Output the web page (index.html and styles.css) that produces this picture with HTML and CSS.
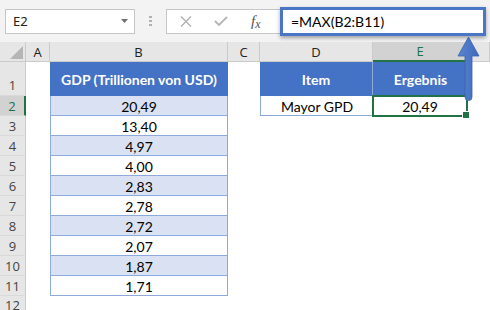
FILE: index.html
```html
<!DOCTYPE html>
<html lang="de">
  <head>
    <meta charset="UTF-8" />
    <title>MAX Beispiel</title>
    <link rel="stylesheet" href="styles.css">
  </head>
  <body>
    <div class="app">
      <div class="toolbar">
        <div class="name-box">
          <span>E2</span>
          <svg class="caret" width="7" height="4" viewBox="0 0 7 4"><path d="M0 0h7L3.5 4z" fill="#6e6e6e"/></svg>
        </div>
        <div class="grip"><span></span><span></span><span></span></div>
        <div class="fn-box">
          <svg class="icon-cancel" width="12" height="11" viewBox="0 0 12 11"><path d="M1 0.5l10 10M11 0.5l-10 10" stroke="#b4b4b4" stroke-width="1.5" fill="none"/></svg>
          <svg class="icon-check" width="14" height="10" viewBox="0 0 14 10"><path d="M1 5l4 4 8-8" stroke="#b4b4b4" stroke-width="1.8" fill="none"/></svg>
          <span class="fx">f<span class="fx-x">x</span></span>
        </div>
        <div class="formula">=MAX(B2:B11)</div>
      </div>

      <div class="sheet">
        <!-- column headers -->
        <div class="hd corner">
          <svg width="13" height="13" viewBox="0 0 13 13"><path d="M0 13h13V0z" fill="#b5b5b5"/></svg>
        </div>
        <div class="hd">A</div>
        <div class="hd">B</div>
        <div class="hd">C</div>
        <div class="hd">D</div>
        <div class="hd hd-sel">E</div>
        <div class="hd"></div>

        <!-- row 1 -->
        <div class="rh rh-tall">1</div>
        <div></div>
        <div class="th">GDP (Trillionen von USD)</div>
        <div></div>
        <div class="th th-split">Item</div>
        <div class="th">Ergebnis</div>
        <div></div>

        <!-- row 2 -->
        <div class="rh rh-sel">2</div>
        <div></div>
        <div class="td band">20,49</div>
        <div></div>
        <div class="td td-left">Mayor GPD</div>
        <div class="td td-active">20,49</div>
        <div></div>

        <div class="rh">3</div><div></div><div class="td">13,40</div><div class="rest"></div>
        <div class="rh">4</div><div></div><div class="td band">4,97</div><div class="rest"></div>
        <div class="rh">5</div><div></div><div class="td">4,00</div><div class="rest"></div>
        <div class="rh">6</div><div></div><div class="td band">2,83</div><div class="rest"></div>
        <div class="rh">7</div><div></div><div class="td">2,78</div><div class="rest"></div>
        <div class="rh">8</div><div></div><div class="td band">2,72</div><div class="rest"></div>
        <div class="rh">9</div><div></div><div class="td">2,07</div><div class="rest"></div>
        <div class="rh">10</div><div></div><div class="td band">1,87</div><div class="rest"></div>
        <div class="rh">11</div><div></div><div class="td">1,71</div><div class="rest"></div>
        <div class="rh rh-last">12</div>
      </div>

      <svg class="arrow" width="28" height="70" viewBox="0 0 28 70">
        <defs>
          <linearGradient id="arrowFill" x1="0" y1="0" x2="1" y2="0">
            <stop offset="0" stop-color="#5a86d6"/>
            <stop offset="1" stop-color="#3f68b8"/>
          </linearGradient>
        </defs>
        <path d="M13.5 2L24 21h-7v41a3.5 3.5 0 0 1-7 0V21H3z" fill="url(#arrowFill)" stroke="#3a62ad" stroke-width="0.8"/>
      </svg>
    </div>
  </body>
</html>
```

FILE: styles.css
```css
* {
  box-sizing: border-box;
}
body {
  margin: 0;
  background-color: #fff;
  font-family: Lato, 'Liberation Sans', sans-serif;
  color: #000;
}
.app {
  position: relative;
  width: 490px;
  height: 310px;
  overflow: hidden;
}

/* formula bar */
.toolbar {
  height: 42px;
  background-color: #f3f3f3;
  display: flex;
  align-items: center;
  padding-left: 5px;
}
.name-box {
  width: 130px;
  height: 25px;
  background-color: #fff;
  border: 1px solid #c6c6c6;
  display: flex;
  align-items: center;
  justify-content: space-between;
  padding: 0 6px 0 7px;
  font-family: 'Noto Sans', sans-serif;
  font-size: 13px;
  color: #222;
}
.grip {
  width: 31px;
  display: flex;
  flex-direction: column;
  align-items: center;
  gap: 2px;
}
.grip span {
  width: 3px;
  height: 2px;
  background-color: #b0b0b0;
}
.fn-box {
  width: 114px;
  height: 25px;
  background-color: #fff;
  border: 1px solid #c6c6c6;
  border-right: none;
  display: flex;
  align-items: center;
  padding-left: 13px;
}
.icon-check {
  margin-left: 22px;
}
.fx {
  margin-left: 23px;
  font-family: 'Liberation Serif', serif;
  font-style: italic;
  font-size: 15px;
  color: #555;
}
.fx-x {
  font-size: 12px;
  position: relative;
  top: 2px;
}
.formula {
  width: 206px;
  height: 29px;
  background-color: #fff;
  border: 3px solid #4a76c6;
  box-shadow: 0 2px 4px rgba(0, 0, 0, 0.35);
  display: flex;
  align-items: center;
  padding-left: 8px;
  font-size: 14px;
}

/* grid */
.sheet {
  display: grid;
  grid-template-columns: 26px 24px 178px 32px 113px 95px 1fr;
  grid-template-rows: 20px 34px repeat(10, 20px) 1fr;
  height: 268px;
}
.hd {
  background-color: #e6e6e6;
  border-right: 1px solid #cbcbcb;
  border-bottom: 1px solid #cbcbcb;
  display: flex;
  align-items: center;
  justify-content: center;
  font-family: 'Open Sans', sans-serif;
  font-size: 13px;
  color: #222;
}
.corner {
  align-items: flex-end;
  justify-content: flex-end;
  padding: 0 2px 2px 0;
}
.hd-sel {
  background-color: #d2d2d2;
  border-bottom: 2px solid #217346;
  color: #217346;
}
.rh {
  background-color: #e6e6e6;
  border-right: 1px solid #cbcbcb;
  border-bottom: 1px solid #d9d9d9;
  display: flex;
  align-items: center;
  justify-content: center;
  font-family: 'Open Sans', sans-serif;
  font-size: 13px;
  color: #444;
}
.rh-tall {
  align-items: flex-end;
  padding-bottom: 1px;
}
.rh-sel {
  background-color: #d2d2d2;
  border-right: 2px solid #217346;
  color: #217346;
}
.rh-last {
  align-items: flex-start;
}
.rest {
  grid-column: span 4;
}

/* tables */
.th {
  background-color: #4472c4;
  color: #fff;
  font-weight: bold;
  font-size: 14px;
  display: flex;
  align-items: center;
  justify-content: center;
}
.th-split {
  border-right: 1px solid #8ea9db;
}
.td {
  border-left: 1px solid #8ea9db;
  border-right: 1px solid #8ea9db;
  border-bottom: 1px solid #8ea9db;
  display: flex;
  align-items: center;
  justify-content: center;
  padding-top: 1px;
  font-size: 14px;
}
.band {
  background-color: #d9e1f2;
}
.td-left {
  border-right: none;
}
.td-active {
  position: relative;
  border-left: none;
}
.td-active::after {
  content: '';
  position: absolute;
  top: -1px;
  left: -1px;
  right: -1px;
  bottom: -2px;
  border: 2px solid #217346;
}
.td-active::before {
  content: '';
  position: absolute;
  right: -3px;
  bottom: -4px;
  width: 6px;
  height: 6px;
  background-color: #217346;
  border: 1px solid #fff;
  z-index: 1;
}

.arrow {
  position: absolute;
  left: 455px;
  top: 35px;
}
```
